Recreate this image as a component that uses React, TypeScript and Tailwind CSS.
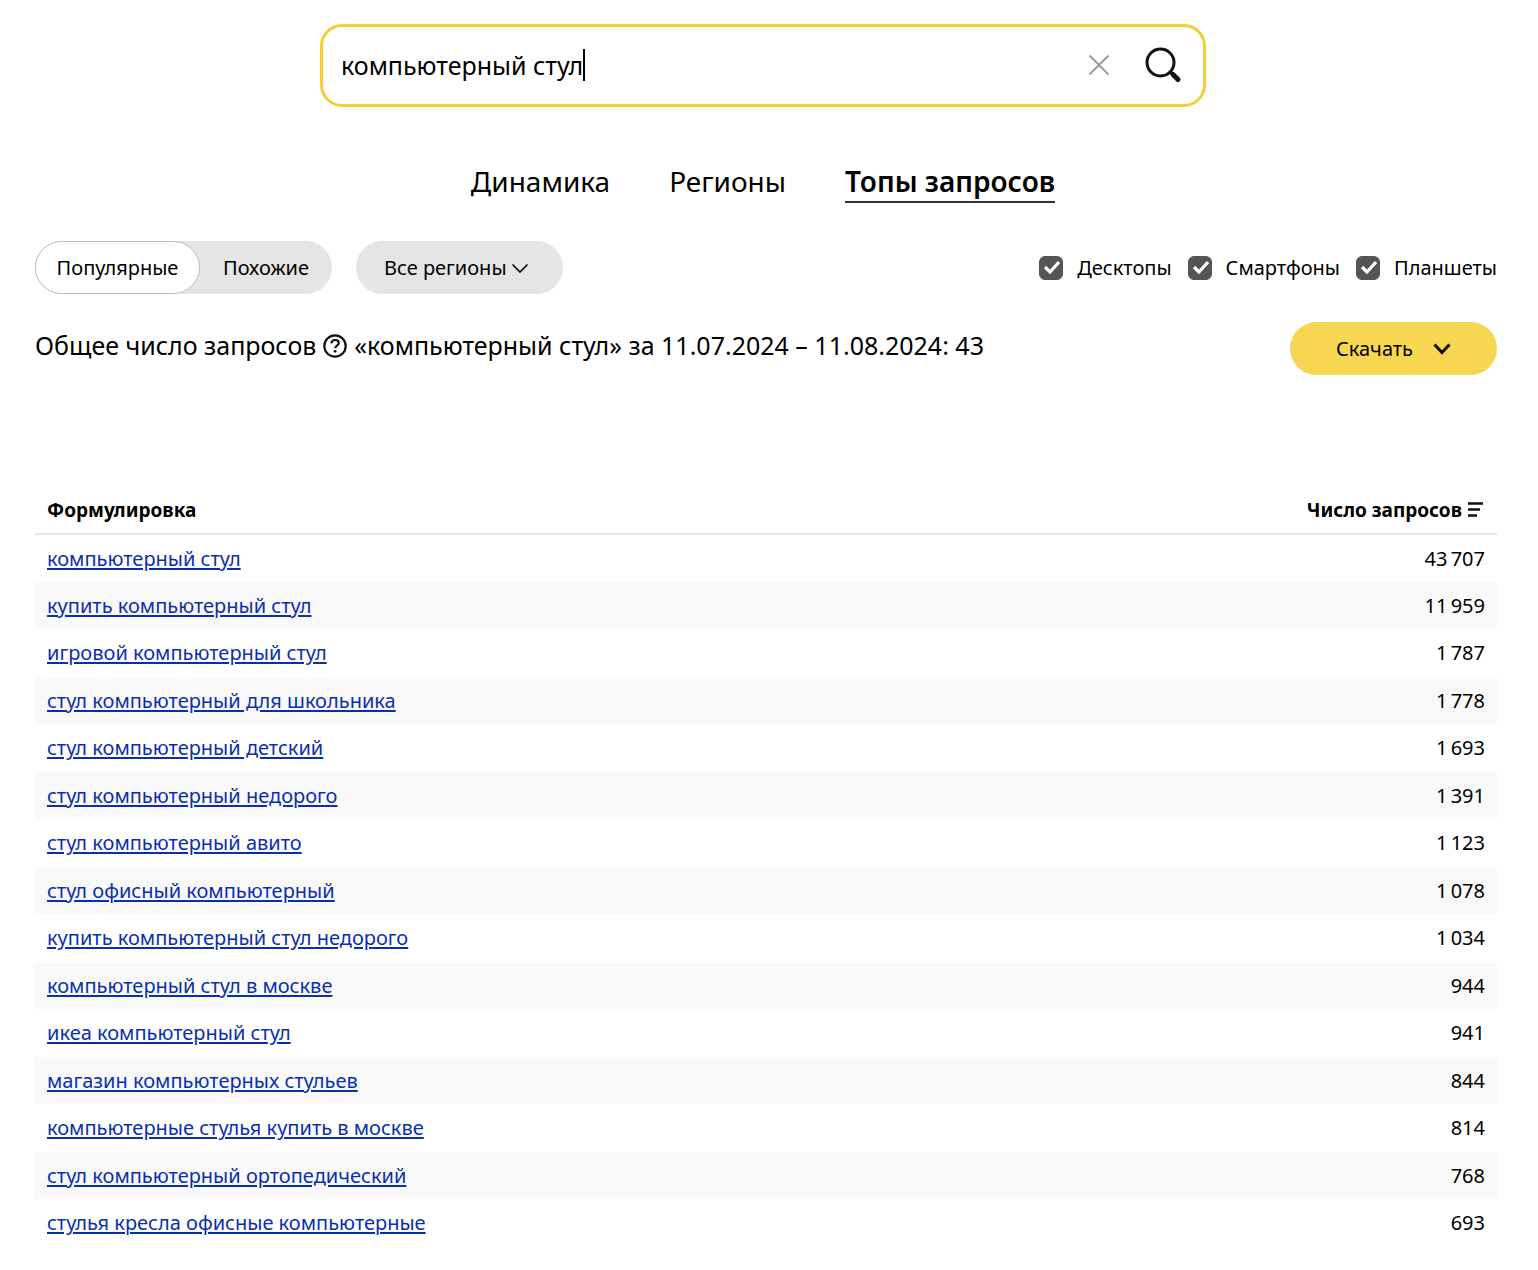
import { useState } from 'react';

type Query = {
  text: string;
  count: number;
};

const queries: Query[] = [
  { text: 'компьютерный стул', count: 43707 },
  { text: 'купить компьютерный стул', count: 11959 },
  { text: 'игровой компьютерный стул', count: 1787 },
  { text: 'стул компьютерный для школьника', count: 1778 },
  { text: 'стул компьютерный детский', count: 1693 },
  { text: 'стул компьютерный недорого', count: 1391 },
  { text: 'стул компьютерный авито', count: 1123 },
  { text: 'стул офисный компьютерный', count: 1078 },
  { text: 'купить компьютерный стул недорого', count: 1034 },
  { text: 'компьютерный стул в москве', count: 944 },
  { text: 'икеа компьютерный стул', count: 941 },
  { text: 'магазин компьютерных стульев', count: 844 },
  { text: 'компьютерные стулья купить в москве', count: 814 },
  { text: 'стул компьютерный ортопедический', count: 768 },
  { text: 'стулья кресла офисные компьютерные', count: 693 }
];

const tabs = ['Динамика', 'Регионы', 'Топы запросов'];
const devices = ['Десктопы', 'Смартфоны', 'Планшеты'];

// thousands are split with a thin space
function formatCount(n: number) {
  return String(n).replace(/\B(?=(\d{3})+$)/g, '\u2009');
}

function SearchBox() {
  const [value, setValue] = useState('компьютерный стул');

  return (
    <form
      role="search"
      onSubmit={(e) => e.preventDefault()}
      className="flex h-[83px] w-full max-w-[886px] items-center rounded-[22px] border-3 border-[#f7cd35] bg-white pr-5 pb-0.5 pl-[18px]"
    >
      <div className="flex min-w-0 flex-1 items-center">
        <input
          type="text"
          aria-label="Поисковый запрос"
          value={value}
          onChange={(e) => setValue(e.target.value)}
          className="field-sizing-content max-w-full min-w-1 text-[25px] leading-9 caret-transparent outline-none"
        />
        <span className="h-8 w-0.5 shrink-0 bg-black" />
      </div>
      <button type="button" aria-label="Очистить" onClick={() => setValue('')}>
        <svg viewBox="0 0 22 22" className="size-[22px]" fill="none" stroke="#9c9c9c" strokeWidth="2">
          <path d="M1.500 1.500 20.500 20.500M20.500 1.500 1.500 20.500" />
        </svg>
      </button>
      <button type="submit" aria-label="Найти" className="ml-[33px]">
        <svg viewBox="0 0 40 40" className="size-10" fill="none" stroke="#111">
          <circle cx="17.500" cy="17.500" r="13.500" strokeWidth="3" />
          <path d="m29.800 29.300 5.200 5.200" strokeWidth="5" strokeLinecap="round" />
          <path d="m27.500 27 3 3" strokeWidth="3" />
        </svg>
      </button>
    </form>
  );
}

function Tabs() {
  return (
    <nav className="mt-[55px] flex justify-center gap-[59px] text-[28px] leading-[39px]">
      {tabs.map((tab) => (
        <a
          key={tab}
          href="#"
          className={
            tab === 'Топы запросов'
              ? 'border-b-2 border-[#333] font-semibold'
              : 'border-b-2 border-transparent'
          }
        >
          {tab}
        </a>
      ))}
    </nav>
  );
}

function DeviceCheckbox({ label }: { label: string }) {
  const [checked, setChecked] = useState(true);

  return (
    <label className="flex items-center gap-[14px]">
      <span className="relative flex size-6">
        <input
          type="checkbox"
          checked={checked}
          onChange={(e) => setChecked(e.target.checked)}
          className="size-6 appearance-none rounded-[6px] border border-[#555] checked:bg-[#555]"
        />
        {checked && (
          <svg
            viewBox="0 0 24 24"
            className="pointer-events-none absolute inset-0"
            fill="none"
            stroke="#fff"
            strokeWidth="3.200"
          >
            <path d="m6 11 5 5 9-10" />
          </svg>
        )}
      </span>
      {label}
    </label>
  );
}

function Filters() {
  return (
    <div className="mt-[38px] flex flex-wrap items-center justify-between gap-4 text-[20px] leading-7">
      <div className="flex gap-6">
        <div className="flex h-[53px] rounded-full bg-[#e5e5e5]">
          <button
            type="button"
            className="w-[165px] rounded-full border border-[#bdbdbd] bg-white text-center"
          >
            Популярные
          </button>
          <button type="button" className="w-[132px] rounded-full text-center">
            Похожие
          </button>
        </div>
        <button
          type="button"
          className="flex h-[53px] w-[207px] items-center gap-1 rounded-full bg-[#e5e5e5] pl-7"
        >
          Все регионы
          <svg viewBox="0 0 18 12" className="w-[18px]" fill="none" stroke="#111" strokeWidth="1.700">
            <path d="m1.500 2.500 7.500 7.500 7.500-7.500" />
          </svg>
        </button>
      </div>
      <div className="flex gap-4">
        {devices.map((d) => (
          <DeviceCheckbox key={d} label={d} />
        ))}
      </div>
    </div>
  );
}

function Summary() {
  return (
    <div className="mt-7 flex items-start justify-between gap-4">
      <h1 className="pt-[5px] text-[25px] leading-9">
        Общее число запросов
        <button type="button" aria-label="Подсказка" className="mx-[7px] align-[-3px]">
          <svg viewBox="0 0 24 24" className="size-6" fill="none" stroke="#111" strokeWidth="2.200">
            <circle cx="12" cy="12" r="10.700" />
            <path d="M8.300 9.300c.3-2 1.700-3.300 3.800-3.300s3.700 1.200 3.700 3c0 2.700-3.600 2.700-3.600 5.300" />
            <circle cx="12.100" cy="17.300" r="1.400" fill="#111" stroke="none" />
          </svg>
        </button>
        «компьютерный стул» за 11.07.2024 – 11.08.2024: 43
      </h1>
      <button
        type="button"
        className="flex h-[53px] w-[207px] shrink-0 items-center justify-center gap-5 rounded-full bg-[#f7d652] text-[20px]"
      >
        Скачать
        <svg viewBox="0 0 18 12" className="w-[18px]" fill="none" stroke="#111" strokeWidth="3">
          <path d="m1.500 1.500 7.500 8 7.500-8" />
        </svg>
      </button>
    </div>
  );
}

function QueriesTable() {
  return (
    <table className="mt-[111px] w-full text-[20px] leading-7">
      <thead>
        <tr className="h-12 border-b-2 border-[#e6e6e6] text-[19px] font-bold">
          <th scope="col" className="pl-3 text-left">
            Формулировка
          </th>
          <th scope="col" className="pr-[14px]">
            <button type="button" className="ml-auto flex items-center gap-[6px]">
              Число запросов
              <svg viewBox="0 0 15 15" className="size-[15px]" fill="none" stroke="#111" strokeWidth="2.600">
                <path d="M0 1.500h15M0 7.500h12M0 13.500h9" />
              </svg>
            </button>
          </th>
        </tr>
      </thead>
      <tbody>
        {queries.map((q) => (
          <tr key={q.text} className="h-12 even:h-[47px] even:bg-[#f9f9f9]">
            <td className="pl-3">
              <a
                href="#"
                className="text-[#0a2fae] underline decoration-2 underline-offset-2 hover:text-red-600"
              >
                {q.text}
              </a>
            </td>
            <td className="pr-3 text-right">{formatCount(q.count)}</td>
          </tr>
        ))}
      </tbody>
    </table>
  );
}

export default function App() {
  return (
    <div className="bg-white pt-6 pr-[41px] pb-5 pl-[35px] font-['Noto_Sans',sans-serif] text-black">
      <header className="flex flex-col items-center pr-[6px]">
        <SearchBox />
        <Tabs />
      </header>
      <main>
        <Filters />
        <Summary />
        <QueriesTable />
      </main>
    </div>
  );
}
